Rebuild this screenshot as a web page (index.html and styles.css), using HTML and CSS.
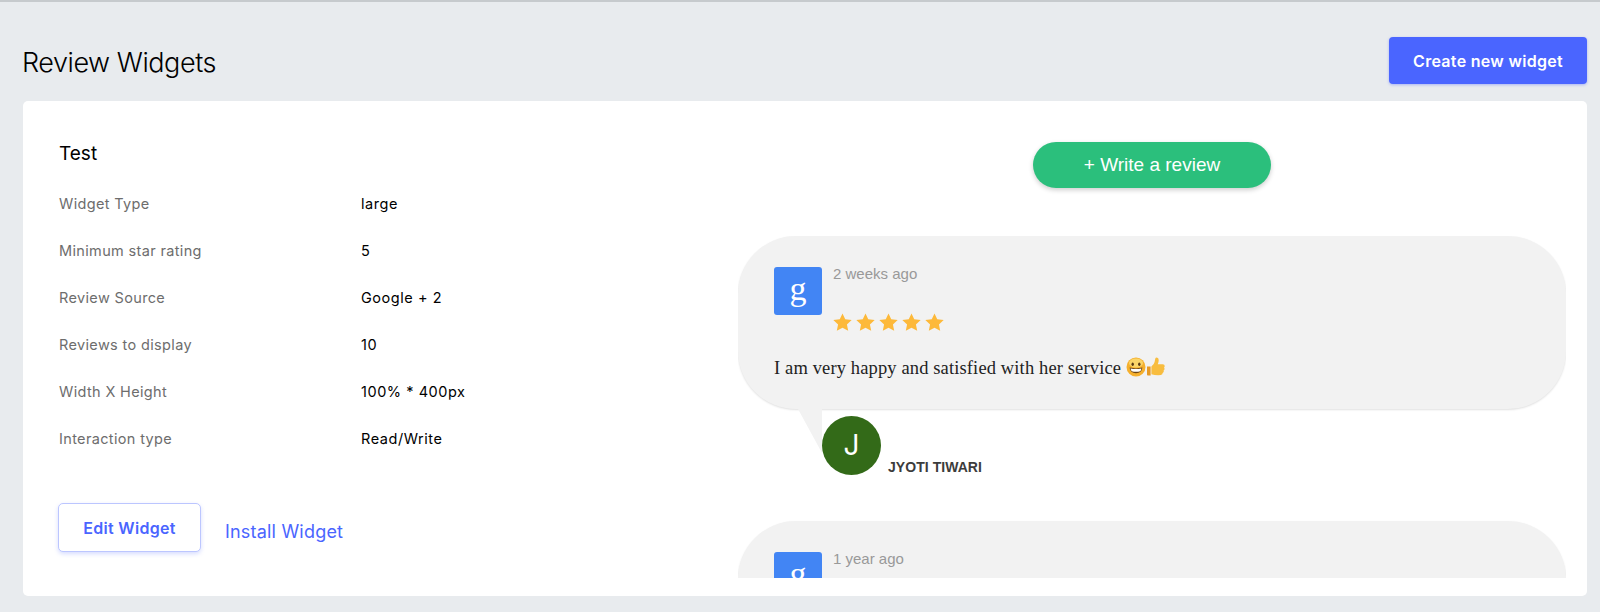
FILE: index.html
```html
<!DOCTYPE html>
<html lang="en">
<head>
  <meta charset="UTF-8" />
  <title>Review Widgets</title>
  <link rel="stylesheet" href="styles.css">
</head>
<body>
  <svg class="defs" width="0" height="0">
    <symbol id="star" viewBox="0 0 18 18">
      <path d="M9 .4l2.6 5.6 6.1.7-4.5 4.2 1.2 6L9 13.9l-5.4 3 1.2-6L.3 6.7l6.1-.7z" />
    </symbol>
  </svg>

  <div class="header">
    <h1>Review Widgets</h1>
    <button class="btn-create">Create new widget</button>
  </div>

  <div class="card">
    <div class="info">
      <h2>Test</h2>
      <div class="row"><span class="label">Widget Type</span><span class="value">large</span></div>
      <div class="row"><span class="label">Minimum star rating</span><span class="value">5</span></div>
      <div class="row"><span class="label">Review Source</span><span class="value">Google + 2</span></div>
      <div class="row"><span class="label">Reviews to display</span><span class="value">10</span></div>
      <div class="row"><span class="label">Width X Height</span><span class="value">100% * 400px</span></div>
      <div class="row"><span class="label">Interaction type</span><span class="value">Read/Write</span></div>
      <div class="actions">
        <button class="btn-edit">Edit Widget</button>
        <a class="install" href="#">Install Widget</a>
      </div>
    </div>

    <div class="preview">
      <button class="btn-write">+ Write a review</button>
      <div class="reviews">
        <div class="review">
          <div class="bubble">
            <div class="meta">
              <div class="logo">g</div>
              <div class="meta-text">
                <div class="date">2 weeks ago</div>
                <div class="stars">
                  <svg><use href="#star" /></svg>
                  <svg><use href="#star" /></svg>
                  <svg><use href="#star" /></svg>
                  <svg><use href="#star" /></svg>
                  <svg><use href="#star" /></svg>
                </div>
              </div>
            </div>
            <p class="text">I am very happy and satisfied with her service
              <svg class="emoji" viewBox="0 0 20 20">
                <circle cx="10" cy="10" r="9.5" fill="#f5b02e" />
                <ellipse cx="10" cy="6" rx="7" ry="4.5" fill="#fbd568" />
                <ellipse cx="6.7" cy="7.2" rx="1.2" ry="1.7" fill="#5a3a12" />
                <ellipse cx="13.3" cy="7.2" rx="1.2" ry="1.7" fill="#5a3a12" />
                <path d="M3.6 10.6q6.4 1.6 12.8 0q-.6 5.6-6.4 5.6t-6.4-5.6z" fill="#6b4416" />
                <path d="M4.6 11.4q5.4 1.2 10.8 0q-.3 2-1.2 2.8q-4.2 1-8.4 0q-.9-.8-1.2-2.8z" fill="#fff" />
              </svg><svg class="emoji" viewBox="0 0 20 20">
                <path d="M1 9.5h3.6v9H1.9q-.9 0-.9-.9z" fill="#e79a25" />
                <path d="M5.4 9.6q2.6-2 3.2-4.6q.3-1.6.7-3.4q.3-1.2 1.5-1.2q1.9.2 1.9 2.6q0 2.4-.9 4.3h5q1.9.1 1.9 1.8q0 1-.7 1.5q.7.6.5 1.6q-.2.9-.9 1.3q.4.8 0 1.6q-.3.7-1 .9q.2 1.7-1.7 2.1q-5.5.4-9.5-.8z" fill="#f8bd3f" />
              </svg></p>
          </div>
          <div class="author">
            <div class="avatar">J</div>
            <div class="name">JYOTI TIWARI</div>
          </div>
        </div>
        <div class="review">
          <div class="bubble">
            <div class="meta">
              <div class="logo">g</div>
              <div class="meta-text">
                <div class="date">1 year ago</div>
              </div>
            </div>
          </div>
        </div>
      </div>
    </div>
  </div>
</body>
</html>
```

FILE: styles.css
```css
html, body { margin: 0; }
body {
  height: 612px;
  box-sizing: border-box;
  overflow: hidden;
  background: #e8ebee;
  border-top: 2px solid #c6cacd;
  font-family: Inter, "Liberation Sans", sans-serif;
  color: #000;
}
.defs { display: block; height: 0; }
button { font-family: inherit; cursor: pointer; }

.header {
  display: flex;
  justify-content: space-between;
  align-items: flex-start;
  height: 99px;
  box-sizing: border-box;
  margin: 0 13px 0 23px;
  padding-top: 35px;
}
h1 {
  margin: 9px 0 0 -1px;
  font-size: 27px;
  line-height: 34px;
  font-weight: 300;
  letter-spacing: -0.45px;
}
.btn-create {
  width: 198px;
  height: 47px;
  border: none;
  border-radius: 4px;
  background: #4a65ff;
  color: #fff;
  font-size: 16px;
  font-weight: 600;
  letter-spacing: 0.3px;
  box-shadow: 0 1px 3px rgba(74, 101, 255, 0.4);
}

.card {
  display: flex;
  height: 495px;
  box-sizing: border-box;
  margin: 0 13px 0 23px;
  background: #fff;
  border-radius: 5px;
}

.info {
  width: 715px;
  box-sizing: border-box;
  padding: 41px 0 0 36px;
}
h2 {
  margin: 0 0 14px;
  font-size: 19px;
  line-height: 24px;
  font-weight: 400;
}
.row {
  display: flex;
  height: 47px;
  align-items: center;
  font-size: 14.5px;
  letter-spacing: 0.35px;
}
.label { width: 302px; color: #6d6d6d; }
.value { color: #000; letter-spacing: 0.55px; }

.actions {
  display: flex;
  align-items: flex-start;
  margin-top: 41px;
}
.btn-edit {
  width: 143px;
  height: 49px;
  margin-left: -1px;
  background: #fff;
  border: 1px solid #bcc6ff;
  border-radius: 5px;
  color: #4a65ff;
  font-size: 16px;
  font-weight: 600;
  letter-spacing: 0.3px;
  box-shadow: 0 2px 4px rgba(74, 101, 255, 0.22);
}
.install {
  margin: 17px 0 0 24px;
  color: #4a65ff;
  font-size: 18px;
  line-height: 24px;
  letter-spacing: 0.2px;
  text-decoration: none;
}

.preview {
  flex: 1;
  padding: 41px 21px 0 0;
  display: flex;
  flex-direction: column;
  align-items: center;
  min-width: 0;
}
.btn-write {
  width: 238px;
  height: 46px;
  flex-shrink: 0;
  border: none;
  border-radius: 23px;
  background: #2bbf7c;
  color: #fff;
  font-family: "Liberation Sans", sans-serif;
  font-size: 19px;
  box-shadow: 0 2px 5px rgba(0, 0, 0, 0.2);
}
.reviews {
  align-self: stretch;
  height: 342px;
  margin-top: 48px;
  overflow: hidden;
  font-family: "Liberation Sans", sans-serif;
}
.review { height: 285px; }
.bubble {
  position: relative;
  height: 173px;
  box-sizing: border-box;
  padding: 31px 36px 0;
  background: #f2f2f2;
  border-radius: 58px;
  box-shadow: 0 1px 2px rgba(0, 0, 0, 0.12);
}
.bubble::after {
  content: "";
  position: absolute;
  left: 60px;
  top: 173px;
  width: 24px;
  height: 44px;
  background: #f2f2f2;
  clip-path: polygon(0 0, 100% 0, 100% 100%);
}
.meta { display: flex; gap: 11px; }
.logo {
  width: 48px;
  height: 48px;
  flex-shrink: 0;
  border-radius: 3px;
  background: #4285f4;
  color: #fff;
  font-family: "Liberation Serif", serif;
  font-size: 34px;
  line-height: 44px;
  text-align: center;
}
.date {
  font-size: 15px;
  line-height: 20px;
  color: #999;
  margin-top: -3px;
}
.stars {
  display: flex;
  gap: 4px;
  margin-top: 29px;
}
.stars svg {
  width: 19px;
  height: 19px;
  fill: #fdb93a;
}
.text {
  margin: 24px 0 0;
  font-family: "Liberation Serif", serif;
  font-size: 18.5px;
  line-height: 24px;
  letter-spacing: 0.13px;
  color: #222;
}
.emoji {
  width: 20px;
  height: 20px;
  vertical-align: -3px;
}
.author {
  display: flex;
  align-items: flex-end;
  gap: 7px;
  margin: 7px 0 0 84px;
}
.avatar {
  width: 59px;
  height: 59px;
  border-radius: 50%;
  background: #336a18;
  color: #fff;
  font-family: Inter, sans-serif;
  font-size: 28px;
  font-weight: 400;
  line-height: 59px;
  text-align: center;
}
.name {
  margin-bottom: -1px;
  font-size: 14px;
  font-weight: 700;
  letter-spacing: 0.05px;
  color: #3c3c3c;
  line-height: 18px;
}
```
